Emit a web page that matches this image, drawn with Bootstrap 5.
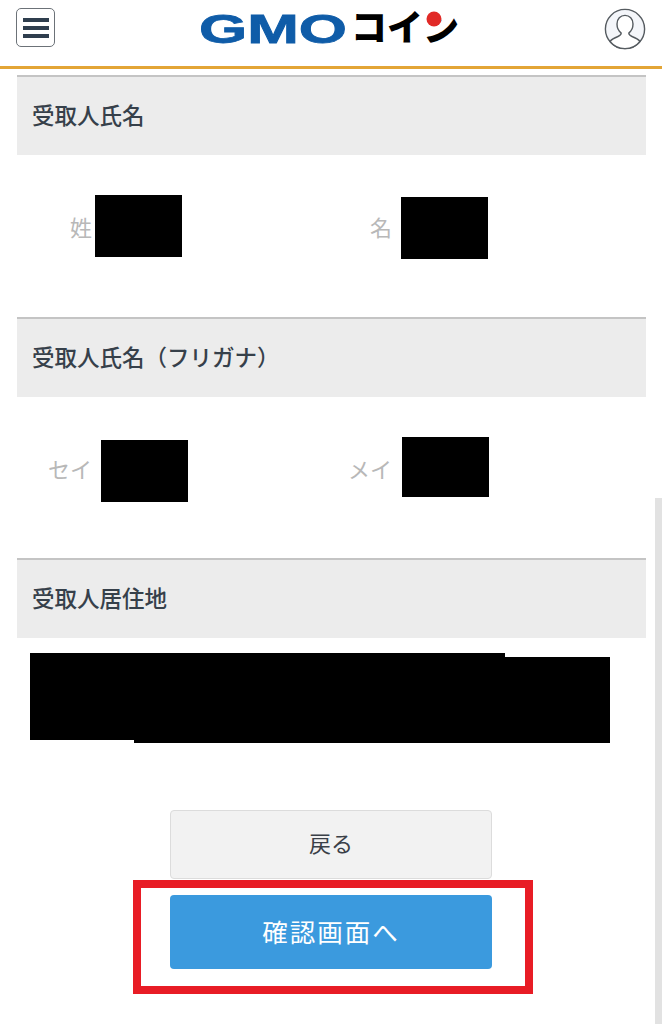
<!DOCTYPE html>
<html lang="ja">
<head>
    <title>受取人情報</title>
    <meta charset="UTF-8">
    <link href="https://cdn.jsdelivr.net/npm/bootstrap@5.3.0/dist/css/bootstrap.min.css" rel="stylesheet">
    <style>
        html, body { height: 1024px; overflow: hidden; }
        body { font-family: "Noto Sans CJK JP", "Liberation Sans", sans-serif; color: #3a4048; background: #fff; }
        .site-header { height: 69px; border-bottom: 3px solid #e3a536; padding: 8px 16px 0 16px; }
        .menu-btn { width: 39px; height: 39px; border: 1px solid #6c7278; border-radius: 5px; background: #fff; gap: 4px; padding: 0; }
        .menu-btn span { display: block; width: 26px; height: 4px; background: #2f3e4e; }
        .logo-svg { margin-top: -8px; }
        .page-body { padding: 6px 16px 0 17px; position: relative; }
        .section-head { height: 80px; background: #ececec; border-top: 2px solid #c4c4c4; padding: 0 0 4px 15px; font-size: 22.5px; font-weight: 500; line-height: 1; color: #36404a; }
        .name-row { height: 162px; }
        .name-row.row-kana { height: 161px; }
        .name-cell { width: 298px; }
        .name-cell + .name-cell { width: 306px; }
        .name-label { width: 75px; margin-top: 60px; text-align: right; font-size: 22px; color: #b8b8b8; line-height: 1; }
        .name-cell + .name-cell .name-label { width: 77px; }
        .redact { background: #000; width: 87px; height: 62px; }
        .redact-sei { margin: 40px 0 0 3px; }
        .redact-mei { margin: 42px 0 0 9px; }
        .redact-kana-sei { margin: 43px 0 0 9px; }
        .redact-kana-mei { margin: 40px 0 0 10px; height: 60px; }
        .address-block { height: 172px; position: relative; }
        .addr-a { position: absolute; left: 13px; top: 15px; width: 475px; height: 87px; background: #000; }
        .addr-b { position: absolute; left: 117px; top: 19px; width: 476px; height: 86px; background: #000; }
        .action-btn { width: 322px; border-radius: 4px; line-height: 1; }
        .back-btn { height: 69px; padding-bottom: 12px; font-size: 22px; background: #f2f2f2; border: 1px solid #dcdcdc; color: #3a4048; }
        .next-btn { height: 74px; padding-bottom: 8px; font-size: 25.5px; letter-spacing: 2px; background: #3b9ade; border: 0; color: #fff; }
        .action-wrap { position: relative; gap: 16px; padding-right: 1px; }
        .red-frame { position: absolute; left: 116px; top: 70px; width: 400px; height: 114px; border: 8px solid #e81c25; pointer-events: none; }
        .scroll-thumb { position: absolute; right: 0; top: 498px; bottom: 0; width: 7px; background: #e2e2e2; }
    </style>
</head>
<body>
<header class="site-header d-flex justify-content-between align-items-start">
    <button type="button" class="menu-btn d-flex flex-column justify-content-center align-items-center" aria-label="menu">
        <span></span><span></span><span></span>
    </button>
    <svg width="262" height="60" viewBox="0 0 262 60" class="d-block logo-svg">
        <text x="0" y="43" textLength="148" lengthAdjust="spacingAndGlyphs" font-family="Liberation Sans" font-weight="700" font-size="41" fill="#0f5ca8" stroke="#0f5ca8" stroke-width=".8">GMO</text>
        <text x="152" y="41" font-family="Noto Sans CJK JP" font-weight="900" font-size="36" fill="#000">コイン</text>
        <circle cx="235" cy="19" r="7.5" fill="#e12a27"/>
    </svg>
    <svg width="42" height="42" viewBox="0 0 42 42" class="d-block" fill="none" stroke="#555b60" stroke-width="1.4">
        <circle cx="21" cy="21" r="19.6" fill="#f4f6fa"/>
        <path d="M6 33.5c2-2.6 5-3.8 8-5 2.2-.9 3.2-2 3.2-3.5-2.6-2-4.2-5.4-4.2-9 0-5 3.4-8.6 8-8.6s8 3.6 8 8.6c0 3.6-1.6 7-4.2 9 0 1.500 1 2.600 3.200 3.500 3 1.200 6 2.400 8 5-3.600 4.600-9 7.100-15 7.100s-11.400-2.500-15-7.100z" fill="#fff"/>
    </svg>
</header>

<main class="page-body">
    <div class="section-head d-flex align-items-center">受取人氏名</div>
    <div class="name-row d-flex">
        <div class="name-cell d-flex">
            <div class="name-label">姓</div>
            <div class="redact redact-sei"></div>
        </div>
        <div class="name-cell d-flex">
            <div class="name-label">名</div>
            <div class="redact redact-mei"></div>
        </div>
    </div>

    <div class="section-head d-flex align-items-center">受取人氏名（フリガナ）</div>
    <div class="name-row row-kana d-flex">
        <div class="name-cell d-flex">
            <div class="name-label">セイ</div>
            <div class="redact redact-kana-sei"></div>
        </div>
        <div class="name-cell d-flex">
            <div class="name-label">メイ</div>
            <div class="redact redact-kana-mei"></div>
        </div>
    </div>

    <div class="section-head d-flex align-items-center">受取人居住地</div>
    <div class="address-block">
        <div class="addr-a"></div>
        <div class="addr-b"></div>
    </div>

    <div class="action-wrap d-flex flex-column align-items-center">
        <button type="button" class="action-btn back-btn btn">戻る</button>
        <button type="button" class="action-btn next-btn btn">確認画面へ</button>
        <div class="red-frame"></div>
    </div>
</main>
<div class="scroll-thumb"></div>
<script src="https://cdn.jsdelivr.net/npm/bootstrap@5.3.0/dist/js/bootstrap.bundle.min.js"></script>
</body>
</html>
